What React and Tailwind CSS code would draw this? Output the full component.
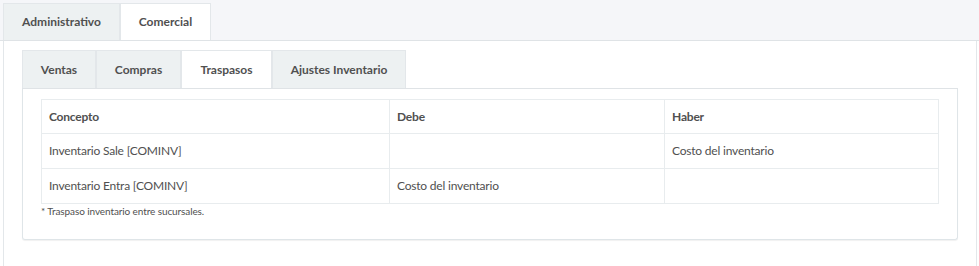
const OUTER = [
  { t: 'Administrativo', w: 'w-[117px]' },
  { t: 'Comercial', w: 'w-[91px]' },
]
const INNER = [
  { t: 'Ventas', w: 'w-[74px]' },
  { t: 'Compras', w: 'w-[85px]' },
  { t: 'Traspasos', w: 'w-[91px]' },
  { t: 'Ajustes Inventario', w: 'w-[134px]' },
]

const FILAS = [
  { concepto: 'Inventario Sale [COMINV]', debe: '', haber: 'Costo del inventario' },
  { concepto: 'Inventario Entra [COMINV]', debe: 'Costo del inventario', haber: '' },
]

export default function App() {
  return (
    <div className="w-[979px] h-[266px] overflow-hidden bg-white text-[#505050]" style={{ fontFamily: 'Lato, sans-serif' }}>
      {/* Tabs externas */}
      <div className="flex pt-[3px] pl-[3px] bg-[#f5f6f9] border-b border-[#dfe3e6]">
        {OUTER.map(({ t, w }) => (
          <div
            key={t}
            className={
              t === 'Comercial'
                ? `${w} h-[37px] flex items-center justify-center text-[12px] font-bold bg-white border border-[#e3e7ea] border-b-0 -mb-px`
                : `${w} h-[37px] flex items-center justify-center text-[12px] font-bold bg-[#edf1f2] border border-[#e3e7ea] border-b-0`
            }
          >
            {t}
          </div>
        ))}
      </div>

      {/* Panel */}
      <div className="ml-[3px] mr-[2px] border-x border-[#e3e7ea] bg-white pt-[9px] px-[18px] h-[230px]">
        <div className="flex border-b border-[#dfe3e6]">
          {INNER.map(({ t, w }) => (
            <div
              key={t}
              className={
                t === 'Traspasos'
                  ? `${w} h-[38px] flex items-center justify-center text-[12px] font-bold bg-white border border-[#e3e7ea] border-b-0 -mb-px`
                  : `${w} h-[38px] flex items-center justify-center text-[12px] font-bold bg-[#edf1f2] border border-[#e3e7ea] border-b-0`
              }
            >
              {t}
            </div>
          ))}
        </div>

        <div className="border border-t-0 border-[#dfe5e8] rounded-b-[3px] shadow-[0_1px_1px_rgba(0,0,0,0.06)] pt-[10px] px-[18px] pb-[20px]">
          <table className="w-full border-collapse text-[12px] tracking-[-0.2px]">
            <thead>
              <tr className="h-[34px]">
                <th className="border border-[#e8ecee] px-[7px] text-left font-bold w-[348px]">Concepto</th>
                <th className="border border-[#e8ecee] px-[7px] text-left font-bold w-[275px]">Debe</th>
                <th className="border border-[#e8ecee] px-[7px] text-left font-bold">Haber</th>
              </tr>
            </thead>
            <tbody>
              {FILAS.map((f) => (
                <tr key={f.concepto} className="h-[35px]">
                  <td className="border border-[#e8ecee] px-[7px]">{f.concepto}</td>
                  <td className="border border-[#e8ecee] px-[7px]">{f.debe}</td>
                  <td className="border border-[#e8ecee] px-[7px]">{f.haber}</td>
                </tr>
              ))}
            </tbody>
          </table>
          <p className="text-[10px] tracking-[-0.1px]">* Traspaso inventario entre sucursales.</p>
        </div>
      </div>
    </div>
  )
}
